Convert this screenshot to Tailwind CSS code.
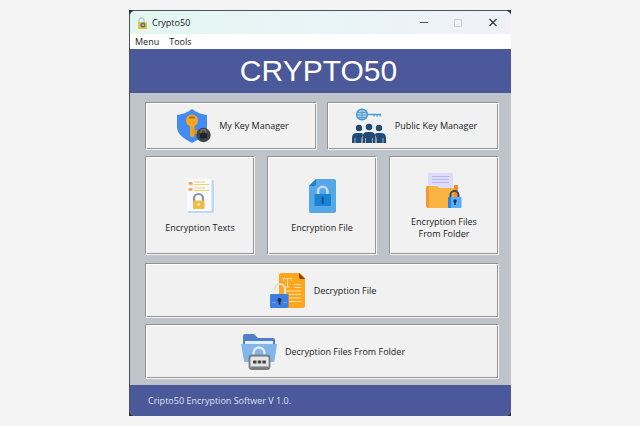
<!DOCTYPE html>
<html lang="en">
<head>
<meta charset="utf-8">
<meta name="viewport" content="width=device-width, initial-scale=1">
<title>Crypto50</title>
<script src="https://cdn.jsdelivr.net/npm/@tailwindcss/browser@4"></script>
</head>
<body class="flex min-h-screen bg-[#f4f4f4] px-[129px] py-2.5 font-['Open_Sans','Noto_Sans',sans-serif] text-[9px] leading-3 text-[#222]">
<div class="flex w-full flex-col bg-[#283039]">
<div class="flex flex-1 flex-col overflow-hidden rounded-md border-t border-l border-[#46545a] bg-[#bec4c9]">
  <header class="flex h-[23px] items-center bg-linear-to-r from-[#e3f7f0] via-[#e9f5f8] to-[#f0f1f9] pl-1.5">
    <svg class="size-3" viewBox="0 0 12 12" aria-hidden="true">
      <path d="M3 6V3.500a2.500 2.500 0 0 1 5 0V5" fill="none" stroke="#bccbd0" stroke-width="1.400"/>
      <rect x="2" y="5" width="9" height="7" rx="1" fill="#f2c230"/>
      <circle cx="7" cy="8" r="2.600" fill="#527d8c"/><circle cx="7" cy="8" r="1" fill="#a6c7c9"/>
    </svg>
    <h1 class="ml-1 flex-1">Crypto50</h1>
    <button type="button" aria-label="Minimize" class="grid w-[34px] place-items-center"><svg class="size-2.5" viewBox="0 0 10 10"><path d="M1 4.500h8" stroke="#555" stroke-width="1.200"/></svg></button>
    <button type="button" aria-label="Maximize" disabled class="grid w-[34px] place-items-center"><svg class="size-2.5" viewBox="0 0 10 10"><rect x="1.500" y="1.500" width="7" height="7" fill="none" stroke="#ccd0d5"/></svg></button>
    <button type="button" aria-label="Close" class="grid w-[36px] place-items-center"><svg class="size-2.5" viewBox="0 0 10 10"><path d="M1.500 1l7 7m0-7l-7 7" stroke="#333" stroke-width="1.200"/></svg></button>
  </header>
  <nav class="flex h-[15px] items-center gap-2.5 bg-white pl-[5px]">
    <button type="button">Menu</button>
    <button type="button">Tools</button>
  </nav>
  <div class="grid h-11 place-items-center bg-[#4b5899] pr-1 font-['Liberation_Sans',Arial,sans-serif] text-[30px] leading-none text-white">
    <h2>CRYPTO50</h2>
  </div>
  <main class="flex flex-1 flex-col pt-[9px] pr-3 pb-1.5 pl-[15px]">
    <div class="grid grid-cols-2 gap-2.5">
      <button type="button" class="flex min-h-12 items-center justify-center gap-2 border border-t-[#929292] border-r-[#f5f5f5] border-b-[#f5f5f5] border-l-[#929292] bg-[#f1f1f1] pl-0.5 shadow-[inset_1px_1px_0_#fff,inset_-1px_-1px_0_#969696]">
        <svg class="size-9" viewBox="0 0 36 36" aria-hidden="true">
          <path d="M17 1C12 5 7 6 2 7v12c0 8 8 12 15 16 7-4 15-8 15-16V7C27 6 22 5 17 1z" fill="#438bf2"/>
          <rect x="15" y="14" width="4.500" height="15" rx="2" fill="#f4a51e"/>
          <path d="M18 22h4v4h-4z" fill="#e8921d"/>
          <circle cx="17" cy="12.500" r="6" fill="#faa71e"/>
          <rect x="14" y="8.500" width="6" height="2" rx="1" fill="#8d6d3a"/>
          <circle cx="28.500" cy="27" r="7.200" fill="#40454c"/>
          <path d="M26 26v-2a2.500 2.500 0 0 1 5 0v2" fill="none" stroke="#9f7951" stroke-width="1.200"/>
          <rect x="25" y="25" width="7" height="5.500" rx="1" fill="#1c2430"/>
        </svg>
        <span>My Key Manager</span>
      </button>
      <button type="button" class="flex min-h-12 items-center justify-center gap-2 border border-t-[#929292] border-r-[#f5f5f5] border-b-[#f5f5f5] border-l-[#929292] bg-[#f1f1f1] pl-0.5 shadow-[inset_1px_1px_0_#fff,inset_-1px_-1px_0_#969696]">
        <svg class="size-9" viewBox="0 0 36 36" aria-hidden="true">
          <circle cx="11" cy="6.500" r="5.400" fill="#a5cee8" stroke="#4294ca" stroke-width="1.400"/>
          <path d="M7 4.500h8M6.500 7h9M8 9.500h6M11 2v9" stroke="#4294ca" stroke-width=".8"/>
          <path d="M16.500 6.500H30M23 7v1.500M26 7v1.500M29 7v1.500" stroke="#4aa0d2" stroke-width="1.500"/>
          <g fill="#214b74">
            <circle cx="8" cy="20" r="3.200"/><circle cx="18" cy="19" r="3.300"/><circle cx="28" cy="20" r="3.200"/>
            <path d="M1 35v-5q0-5 5-5h4q2 0 2 2-1.500 2-1.500 4v4zM35 35v-5q0-5-5-5h-4q-2 0-2 2 1.500 2 1.500 4v4z"/>
            <path d="M11.500 35v-6q0-5 5-5h3q5 0 5 5v6z"/>
          </g>
          <path d="M4 30v5M32 30v5M14.500 30v5M21.500 30v5" stroke="#b8c7d5" stroke-width=".8"/>
        </svg>
        <span>Public Key Manager</span>
      </button>
    </div>
    <div class="mt-1.5 grid grid-cols-3 gap-3">
      <button type="button" class="flex min-h-[99px] flex-col items-center justify-center gap-2 border border-t-[#929292] border-r-[#f5f5f5] border-b-[#f5f5f5] border-l-[#929292] bg-[#f1f1f1] shadow-[inset_1px_1px_0_#fff,inset_-1px_-1px_0_#969696]">
        <svg class="size-9" viewBox="0 0 36 36" aria-hidden="true">
          <rect x="6" y="2" width="26" height="33" rx="1" fill="#bfd8f7"/>
          <rect x="5" y="1" width="24.500" height="32" rx="1" fill="#f8fafe"/>
          <path d="M6.500 5.500h4M6.500 11.500h4" stroke="#eea052" stroke-width="2.400"/>
          <path d="M12 4h11M12 6.500h15M12 10h11M12 12.500h15" stroke="#f5d168" stroke-width="1.200"/>
          <path d="M12 24v-3.500a4.500 4.500 0 0 1 9 0V24" fill="none" stroke="#8f9498" stroke-width="2.200"/>
          <rect x="11" y="22.500" width="11.500" height="8.500" rx="1" fill="#edbd48"/>
          <circle cx="16.700" cy="26.500" r="1.300" fill="#fff0bd"/>
        </svg>
        <span>Encryption Texts</span>
      </button>
      <button type="button" class="flex min-h-[99px] flex-col items-center justify-center gap-2 border border-t-[#929292] border-r-[#f5f5f5] border-b-[#f5f5f5] border-l-[#929292] bg-[#f1f1f1] shadow-[inset_1px_1px_0_#fff,inset_-1px_-1px_0_#969696]">
        <svg class="size-9" viewBox="0 0 36 36" aria-hidden="true">
          <path d="M12 1h18q2 0 2 2v30q0 2-2 2H7q-2 0-2-2V8z" fill="#55a8e7"/>
          <path d="M12 1v5q0 2-2 2H5z" fill="#1f7fcb"/>
          <path d="M14 17v-3.500a4.700 4.700 0 0 1 9.400 0V17" fill="none" stroke="#cad9e6" stroke-width="2.500"/>
          <rect x="10.500" y="16" width="16.500" height="12" rx="1" fill="#1b83d4"/>
          <path d="M18.700 20v5" stroke="#155186" stroke-width="2" stroke-linecap="round"/>
        </svg>
        <span>Encryption File</span>
      </button>
      <button type="button" class="flex min-h-[99px] flex-col items-center justify-center gap-2 border border-t-[#929292] border-r-[#f5f5f5] border-b-[#f5f5f5] border-l-[#929292] bg-[#f1f1f1] shadow-[inset_1px_1px_0_#fff,inset_-1px_-1px_0_#969696]">
        <svg class="size-9" viewBox="0 0 36 36" aria-hidden="true">
          <path d="M2 1h25v20H2z" fill="#dddcfb"/>
          <path d="M6 4.500h17M6 7.500h17M6 10.500h17" stroke="#b9b6ee"/>
          <path d="M28 13h4v12h-4z" fill="#f18a32"/>
          <path d="M2 14h8q2 0 3 2h15v20H3q-3 0-3-3V16q0-2 2-2z" fill="#fcb440"/>
          <path d="M2 14h1v22q-3 0-3-3V16q0-2 2-2z" fill="#f5963b"/>
          <path d="M24.500 26v-3a4 4 0 0 1 8 0v3" fill="none" stroke="#394963" stroke-width="2"/>
          <rect x="22" y="25" width="13.500" height="11" rx="1" fill="#58adf6"/>
          <path d="M22 26q0-1 1-1h2v11h-2q-1 0-1-1z" fill="#2e82db"/>
          <circle cx="29" cy="29" r="1.700" fill="#18365c"/><path d="M29 29v4" stroke="#18365c" stroke-width="1.500"/>
        </svg>
        <span>Encryption Files<br>From Folder</span>
      </button>
    </div>
    <button type="button" class="mt-2 flex min-h-[55px] items-center justify-center gap-2 border border-t-[#929292] border-r-[#f5f5f5] border-b-[#f5f5f5] border-l-[#929292] bg-[#f1f1f1] pl-0.5 shadow-[inset_1px_1px_0_#fff,inset_-1px_-1px_0_#969696]">
      <svg class="size-9" viewBox="0 0 36 36" aria-hidden="true">
        <path d="M11 0h19l5 5v28q0 2-2 2H11q-2 0-2-2V2q0-2 2-2z" fill="#ffa51e"/>
        <path d="M29 0l6 6h-4q-2 0-2-2z" fill="#77451b"/>
        <path d="M13.500 8V5.500h8V8M17.500 5.500V14M15.500 14h4M24 11.500h7M24 14.500h7M15 18h16M19 21.500h12M19 25h12M19 28.500h12" fill="none" stroke="#ffe0a0" stroke-width="1.100"/>
        <path d="M5 17v-1a5 5 0 0 1 10 0v7" fill="none" stroke="#dce2d0" stroke-width="2.200"/>
        <rect x="0" y="21" width="18.500" height="14" rx="1.500" fill="#3c7fe1"/>
        <path d="M2 29.500h4M13 29.500h4" stroke="#6ba2ef"/>
        <circle cx="9.500" cy="27" r="2.100" fill="#202d45"/><path d="M9.500 27v4.500" stroke="#202d45" stroke-width="1.700"/>
      </svg>
      <span>Decryption File</span>
    </button>
    <button type="button" class="mt-1.5 flex min-h-[55px] items-center justify-center gap-2 border border-t-[#929292] border-r-[#f5f5f5] border-b-[#f5f5f5] border-l-[#929292] bg-[#f1f1f1] pl-0.5 shadow-[inset_1px_1px_0_#fff,inset_-1px_-1px_0_#969696]">
      <svg class="size-9" viewBox="0 0 36 36" aria-hidden="true">
        <path d="M2 11V2q0-2 2-2h9l4 4h15q2 0 2 2v7H2z" fill="#5280c8"/>
        <path d="M4 7h28v8H4z" fill="#e3f0fc"/>
        <path d="M0 10h36l-2.500 17q0 1-2 1H5q-2 0-2-1z" fill="#83b7e9"/>
        <path d="M12.500 22v-3a5.500 5.500 0 0 1 11 0v3" fill="none" stroke="#dfedf9" stroke-width="2.300"/>
        <rect x="8.500" y="21.500" width="20" height="13.500" rx="2.500" fill="#e5e5e5" stroke="#777c80" stroke-width="1.800"/>
        <path d="M10 33.500h17" stroke="#777c80" stroke-width="2"/>
        <path d="M12 28h3.500M16.700 28h3.500M21.400 28h3.500" stroke="#42464a" stroke-width="3.200"/>
      </svg>
      <span>Decryption Files From Folder</span>
    </button>
  </main>
  <footer class="flex h-[31px] items-center bg-[#4b5899] pl-[18px] text-[#dfe3f3]">Cripto50 Encryption Softwer V 1.0.</footer>
</div>
</div>
</body>
</html>
